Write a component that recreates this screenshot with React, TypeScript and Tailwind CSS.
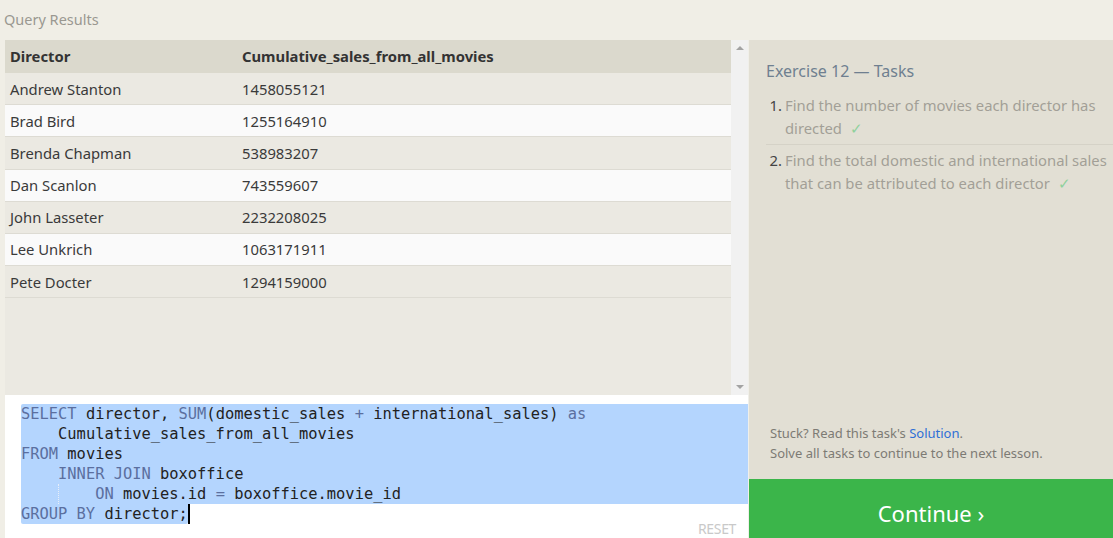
const rows: [string, string][] = [
  ['Andrew Stanton', '1458055121'],
  ['Brad Bird', '1255164910'],
  ['Brenda Chapman', '538983207'],
  ['Dan Scanlon', '743559607'],
  ['John Lasseter', '2232208025'],
  ['Lee Unkrich', '1063171911'],
  ['Pete Docter', '1294159000'],
];

const ui = { fontFamily: '"Noto Sans", "Open Sans", sans-serif' };
const mono = { fontFamily: '"DejaVu Sans Mono", "Liberation Mono", monospace' };

function Kw({ children }: { children: React.ReactNode }) {
  return <span className="text-[#5b6f9f]">{children}</span>;
}

function Check() {
  return <span className="ml-2 text-[#8fd19c]">✓</span>;
}

export default function App() {
  return (
    <div className="h-[538px] w-full flex flex-col bg-[#f0eee6] overflow-hidden" style={ui}>
      <div className="h-[40px] flex items-center px-1 text-[14.5px] text-[#9a9891]">Query Results</div>

      <div className="flex flex-1 min-h-0">
        {/* left side */}
        <div className="w-[748px] pl-[5px] flex flex-col">
          <div className="h-[355px] flex">
            <div className="flex-1 bg-[#ebe9e2] text-[14.8px] text-[#3a3a3a]">
              <div className="h-[33px] flex items-center bg-[#dbd9cd] font-bold text-[#333]">
                <div className="w-[237px] pl-[5px]">Director</div>
                <div>Cumulative_sales_from_all_movies</div>
              </div>
              {rows.map(([d, v], i) => (
                <div
                  key={d}
                  className={
                    'h-[32.2px] flex items-center border-b border-[#dddbd3] ' +
                    (i % 2 === 0 ? 'bg-[#ebe9e2]' : 'bg-[#fafafa]')
                  }
                >
                  <div className="w-[237px] pl-[5px]">{d}</div>
                  <div>{v}</div>
                </div>
              ))}
            </div>
            <div className="w-[17px] bg-[#f1f1f1] flex flex-col items-center justify-between py-[6px]">
              <div className="w-0 h-0 border-l-[4px] border-r-[4px] border-b-[4px] border-l-transparent border-r-transparent border-b-[#a3a3a3]" />
              <div className="w-0 h-0 border-l-[4px] border-r-[4px] border-t-[4px] border-l-transparent border-r-transparent border-t-[#a3a3a3]" />
            </div>
          </div>

          <div className="flex-1 bg-white pt-[9px] pl-[16px] relative text-[15.4px] leading-[20px] text-[#222]" style={mono}>
            <div className="bg-[#b4d5fe] rounded-tl-[2px] whitespace-pre">
              <div><Kw>SELECT</Kw> director, <Kw>SUM</Kw>(domestic_sales <Kw>+</Kw> international_sales) <Kw>as</Kw></div>
              <div>{'    '}Cumulative_sales_from_all_movies</div>
              <div><Kw>FROM</Kw> movies</div>
              <div>{'    '}<Kw>INNER JOIN</Kw> boxoffice</div>
              <div className="relative">
                <span className="absolute left-[37px] top-0 h-[20px] border-l border-dotted border-[#e8eef8]" />
                {'        '}<Kw>ON</Kw> movies.id <Kw>=</Kw> boxoffice.movie_id
              </div>
            </div>
            <div className="whitespace-pre flex">
              <span className="bg-[#b4d5fe] rounded-b-[2px]"><Kw>GROUP BY</Kw> director;</span>
              <span className="w-[2px] h-[20px] bg-black" />
            </div>
            <div className="absolute right-[12px] bottom-[-1px] text-[14px] text-[#c9c9c9] tracking-tight" style={ui}>RESET</div>
          </div>
        </div>

        {/* right side */}
        <div className="flex-1 flex flex-col border-l border-[#f0efe9]">
          <div className="flex-1 bg-[#e2dfd4] pl-[17px] pt-[19px] flex flex-col">
            <div className="text-[16px] text-[#6f7f90]">Exercise 12 — Tasks</div>
            <ol className="mt-[11px] text-[14.8px] leading-[23px] text-[#a29f97]">
              <li className="flex pb-[4px] border-b border-[#d5d2c7]">
                <span className="w-[19px] shrink-0 text-right pr-[3px] text-[#444]">1.</span>
                <span>Find the number of movies each director has directed<Check /></span>
              </li>
              <li className="flex pt-[4px]">
                <span className="w-[19px] shrink-0 text-right pr-[3px] text-[#444]">2.</span>
                <span>Find the total domestic and international sales that can be attributed to each director<Check /></span>
              </li>
            </ol>
            <div className="mt-auto pb-[16px] pl-[4px] text-[13px] leading-[20px] text-[#7d7b74]">
              <div>Stuck? Read this task's <span className="text-[#2f6fd6]">Solution</span>.</div>
              <div>Solve all tasks to continue to the next lesson.</div>
            </div>
          </div>
          <div className="h-[59px] bg-[#3bb54a] flex items-center justify-center pt-[10px] text-white text-[22px]">Continue ›</div>
        </div>
      </div>
    </div>
  );
}
